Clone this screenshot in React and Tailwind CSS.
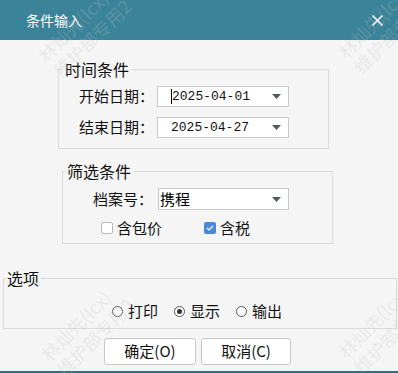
import { useState } from 'react'

const cjk = "font-['Noto_Sans_CJK_SC','Noto_Sans',sans-serif]"

function Caret() {
  return (
    <svg width="9" height="5" viewBox="0 0 9 5" className="shrink-0">
      <polygon points="0,0 9,0 4.5,5" fill="#505c56" />
    </svg>
  )
}

function Combo({ value, width, mono, caret }) {
  return (
    <div
      className={`flex items-center h-full bg-white border border-[#c8c8c8] ${width}`}
    >
      <div className={`flex-1 flex items-center ${mono ? 'pl-[13px]' : 'pl-px'}`}>
        {caret && <span className="inline-block w-px h-[15px] bg-black" />}
        <span
          className={
            mono
              ? "font-['Liberation_Mono',monospace] text-[13px] text-[#111]"
              : 'text-[15px] leading-[20px] text-black'
          }
        >
          {value}
        </span>
      </div>
      <div className="pr-[7px]">
        <Caret />
      </div>
    </div>
  )
}

function Checkbox({ checked, label }) {
  return (
    <div className="flex items-center gap-[4px]">
      {checked ? (
        <span className="w-[12px] h-[12px] rounded-[2px] bg-[#4a88da] flex items-center justify-center">
          <svg width="8" height="6" viewBox="0 0 8 6">
            <path d="M1 3 L3 5 L7 1" stroke="white" strokeWidth="1.2" fill="none" />
          </svg>
        </span>
      ) : (
        <span className="w-[12px] h-[12px] rounded-[2px] bg-white border border-[#b8b8b8]" />
      )}
      <span className="text-[15px] leading-[20px]">{label}</span>
    </div>
  )
}

function Radio({ checked, label, onClick }) {
  return (
    <button type="button" onClick={onClick} className="flex items-center gap-[5px]">
      <span className="w-[11px] h-[11px] rounded-full border border-[#555] bg-white flex items-center justify-center">
        {checked && <span className="w-[5px] h-[5px] rounded-full bg-[#333]" />}
      </span>
      <span className="text-[15px] leading-[20px]">{label}</span>
    </button>
  )
}

// faint diagonal watermark that sits over the dialog
function Watermark({ left, top }) {
  return (
    <div
      className="absolute pointer-events-none select-none -rotate-45 origin-top-left text-[18px] leading-[22px] whitespace-nowrap text-[#c4c4c4]/25"
      style={{ left, top }}
      aria-hidden
    >
      <div>林灿先(lcx)</div>
      <div>维护部专用2</div>
    </div>
  )
}

export default function App() {
  const [mode, setMode] = useState('show')

  return (
    <div className={`relative h-[373px] w-[398px] overflow-hidden bg-[#f5f5f5] flex flex-col text-[#111] ${cjk}`}>
      <div className="h-10 shrink-0 bg-[#3a8399] flex items-center justify-between pl-[26px] pr-[15px]">
        <span className="text-white text-[14px]">条件输入</span>
        <svg width="11" height="11" viewBox="0 0 11 11">
          <path d="M0.5 0.5 L10.5 10.5 M10.5 0.5 L0.5 10.5" stroke="white" strokeWidth="1.5" />
        </svg>
      </div>

      <fieldset className="ml-[58px] mt-[20px] w-[271px] border border-[#dadada] pt-[8px] pb-[10px]">
        <legend className="ml-[4px] px-[2px] text-[16px] leading-[18px]">时间条件</legend>
        <div className="flex flex-col gap-[10px] pl-[20px]">
          <div className="flex items-center h-[21px]">
            <span className="w-[78px] text-[15px]">开始日期：</span>
            <Combo value="2025-04-01" width="w-[132px]" mono caret />
          </div>
          <div className="flex items-center h-[21px]">
            <span className="w-[78px] text-[15px]">结束日期：</span>
            <Combo value="2025-04-27" width="w-[132px]" mono />
          </div>
        </div>
      </fieldset>

      <fieldset className="ml-[62px] mt-[13px] w-[271px] border border-[#dadada] pt-[8px] pb-[5px]">
        <legend className="ml-[2px] px-[2px] text-[16px] leading-[18px]">筛选条件</legend>
        <div className="flex items-center h-[22px] pl-[30px]">
          <span className="w-[65px] text-[15px]">档案号：</span>
          <Combo value="携程" width="w-[131px]" />
        </div>
        <div className="flex items-center h-[20px] mt-[8px] pl-[38px] gap-[42px]">
          <Checkbox label="含包价" />
          <Checkbox checked label="含税" />
        </div>
      </fieldset>

      <fieldset className="ml-[3px] mt-[25px] w-[394px] border border-[#dadada] pt-[14px] pb-[7px]">
        <legend className="ml-[1px] px-[2px] text-[16px] leading-[18px]">选项</legend>
        <div className="flex items-center h-[20px] pl-[108px] gap-[16px]">
          <Radio label="打印" checked={mode === 'print'} onClick={() => setMode('print')} />
          <Radio label="显示" checked={mode === 'show'} onClick={() => setMode('show')} />
          <Radio label="输出" checked={mode === 'out'} onClick={() => setMode('out')} />
        </div>
      </fieldset>

      <div className="flex mt-[9px] pl-[104px] gap-[5px]">
        <button type="button" className="w-[92px] h-[27px] bg-white border border-[#c8c8c8] rounded-[3px] text-[15px]">
          确定(O)
        </button>
        <button type="button" className="w-[90px] h-[27px] bg-white border border-[#c8c8c8] rounded-[3px] text-[15px]">
          取消(C)
        </button>
      </div>

      <div className="flex-1" />
      <div className="h-[2px] shrink-0 bg-[#2f6e80]" />

      <Watermark left={33} top={50} />
      <Watermark left={333} top={46} />
      <Watermark left={36} top={349} />
      <Watermark left={333} top={346} />
    </div>
  )
}
